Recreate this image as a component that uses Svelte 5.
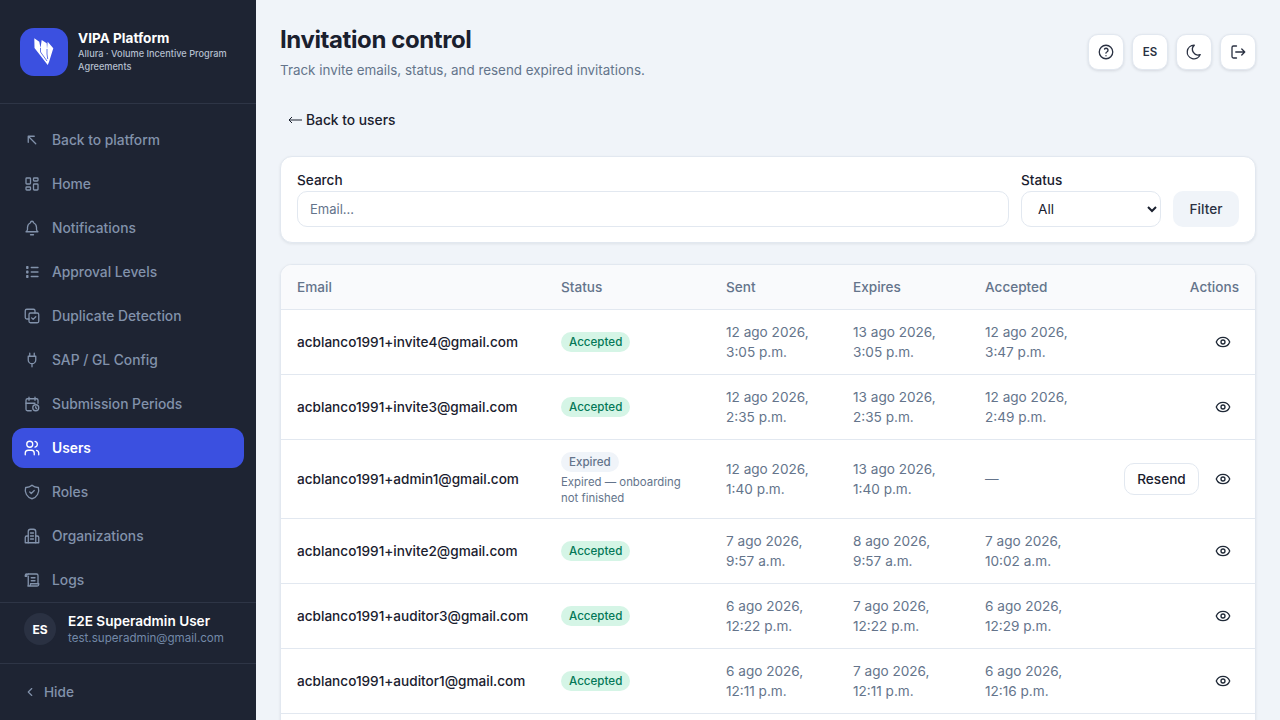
<script>
  const navItems = [
    { label: "Back to platform", icon: "back" },
    { label: "Home", icon: "home" },
    { label: "Notifications", icon: "bell" },
    { label: "Approval Levels", icon: "list" },
    { label: "Duplicate Detection", icon: "copy" },
    { label: "SAP / GL Config", icon: "plug" },
    { label: "Submission Periods", icon: "calendar" },
    { label: "Users", icon: "users", active: true },
    { label: "Roles", icon: "shield" },
    { label: "Organizations", icon: "building" },
    { label: "Logs", icon: "script" }
  ];

  const invites = [
    { email: "acblanco1991+invite4@gmail.com", status: "Accepted", sent: ["12 ago 2026,", "3:05 p.m."], expires: ["13 ago 2026,", "3:05 p.m."], accepted: ["12 ago 2026,", "3:47 p.m."] },
    { email: "acblanco1991+invite3@gmail.com", status: "Accepted", sent: ["12 ago 2026,", "2:35 p.m."], expires: ["13 ago 2026,", "2:35 p.m."], accepted: ["12 ago 2026,", "2:49 p.m."] },
    { email: "acblanco1991+admin1@gmail.com", status: "Expired", note: "Expired — onboarding not finished", sent: ["12 ago 2026,", "1:40 p.m."], expires: ["13 ago 2026,", "1:40 p.m."], accepted: null },
    { email: "acblanco1991+invite2@gmail.com", status: "Accepted", sent: ["7 ago 2026,", "9:57 a.m."], expires: ["8 ago 2026,", "9:57 a.m."], accepted: ["7 ago 2026,", "10:02 a.m."] },
    { email: "acblanco1991+auditor3@gmail.com", status: "Accepted", sent: ["6 ago 2026,", "12:22 p.m."], expires: ["7 ago 2026,", "12:22 p.m."], accepted: ["6 ago 2026,", "12:29 p.m."] },
    { email: "acblanco1991+auditor1@gmail.com", status: "Accepted", sent: ["6 ago 2026,", "12:11 p.m."], expires: ["7 ago 2026,", "12:11 p.m."], accepted: ["6 ago 2026,", "12:16 p.m."] }
  ];
</script>

<div class="shell">
  <aside class="sidebar">
    <div class="brand">
      <div class="logo">
        <svg viewBox="0 0 48 48" width="48" height="48">
          <path fill="#fff" d="M14.300 10.300l5 3.400 1.200 6.300 1.200-8 5 3.300.3 5.700.7-7.300 5.600 6.600-4.300 13.700-1.300 2.900-13.200-17z" />
          <path fill="none" stroke="#3b50e0" stroke-width="0.8" d="M20.500 20v4l6.500 9M27 21v5l.7 5" />
        </svg>
      </div>
      <div class="brand-text">
        <strong>VIPA Platform</strong>
        <span>Allura · Volume Incentive Program Agreements</span>
      </div>
    </div>

    <nav class="nav">
      {#each navItems as item}
        <div class="nav-item" class:active={item.active}>
          <svg class="nav-icon" viewBox="0 0 24 24" width="20" height="20" fill="none" stroke="currentColor" stroke-width="1.75" stroke-linecap="round" stroke-linejoin="round">
            {#if item.icon === "back"}
              <path d="M17 17 7 7M7 15V7h8" />
            {:else if item.icon === "home"}
              <rect x="4" y="4" width="6" height="8" rx="1" /><rect x="4" y="16" width="6" height="4" rx="1" /><rect x="14" y="12" width="6" height="8" rx="1" /><rect x="14" y="4" width="6" height="4" rx="1" />
            {:else if item.icon === "bell"}
              <path d="M10 5a2 2 0 1 1 4 0 7 7 0 0 1 4 6v3a4 4 0 0 0 2 3H4a4 4 0 0 0 2-3v-3a7 7 0 0 1 4-6" /><path d="M10 21h4" />
            {:else if item.icon === "list"}
              <path d="M11 6h9M11 12h9M11 18h9" /><path d="M5 5h1.500v2H5zM5 11h1.500v2H5zM5 17h1.500v2H5z" />
            {:else if item.icon === "copy"}
              <rect x="8" y="8" width="13" height="13" rx="2" /><path d="M16 8V5a2 2 0 0 0-2-2H5a2 2 0 0 0-2 2v9a2 2 0 0 0 2 2h3" /><path d="m11.500 14.500 2 2 3.500-3.500" />
            {:else if item.icon === "plug"}
              <path d="M9 7V3M15 7V3M7 7h10v5a5 5 0 0 1-10 0zM12 17v4" />
            {:else if item.icon === "calendar"}
              <path d="M11 21H6a2 2 0 0 1-2-2V7a2 2 0 0 1 2-2h12a2 2 0 0 1 2 2v4" /><path d="M16 3v4M8 3v4M4 11h12" /><circle cx="17" cy="17" r="4" /><path d="M17 15.500V17l1 1" />
            {:else if item.icon === "users"}
              <circle cx="9" cy="7" r="4" /><path d="M3 21v-2a4 4 0 0 1 4-4h4a4 4 0 0 1 4 4v2" /><path d="M16 3.100a4 4 0 0 1 0 7.800M21 21v-2a4 4 0 0 0-3-3.850" />
            {:else if item.icon === "shield"}
              <path d="M12 3a12 12 0 0 0 8.500 3A12 12 0 0 1 12 21 12 12 0 0 1 3.500 6 12 12 0 0 0 12 3" /><path d="m9 12 2 2 4-4" />
            {:else if item.icon === "building"}
              <path d="M7 21V6a3 3 0 0 1 3-3h4a3 3 0 0 1 3 3v15" /><path d="M7 12H5a2 2 0 0 0-2 2v7h18v-7a2 2 0 0 0-2-2h-2" /><path d="M10 8h4M10 12h4M10 16h4" />
            {:else if item.icon === "script"}
              <path d="M7 4h11a2 2 0 0 1 2 2v11" /><path d="M7 4a2 2 0 0 0-2 2v1H3V6a2 2 0 0 1 2-2" /><path d="M7 7v11a3 3 0 0 1-.500 2H19a2 2 0 0 0 2-2v-1H10v1a2 2 0 0 1-2 2" /><path d="M11 9h5M11 13h5" />
            {/if}
          </svg>
          <span>{item.label}</span>
        </div>
      {/each}
    </nav>

    <div class="user">
      <div class="avatar">ES</div>
      <div class="user-text">
        <strong>E2E Superadmin User</strong>
        <span>test.superadmin@gmail.com</span>
      </div>
    </div>

    <div class="hide">
      <svg viewBox="0 0 24 24" width="14" height="14" fill="none" stroke="currentColor" stroke-width="2" stroke-linecap="round" stroke-linejoin="round"><path d="m15 6-6 6 6 6" /></svg>
      <span>Hide</span>
    </div>
  </aside>

  <main class="content">
    <header class="top">
      <div>
        <h1>Invitation control</h1>
        <p>Track invite emails, status, and resend expired invitations.</p>
      </div>
      <div class="top-actions">
        <button class="square" aria-label="Help">
          <svg viewBox="0 0 24 24" width="18" height="18" fill="none" stroke="currentColor" stroke-width="1.75" stroke-linecap="round" stroke-linejoin="round"><circle cx="12" cy="12" r="9" /><path d="M12 17v.01M12 13.500a1.500 1.500 0 0 1 1-1.500 2.600 2.600 0 1 0-3-4" /></svg>
        </button>
        <button class="square lang">ES</button>
        <button class="square" aria-label="Theme">
          <svg viewBox="0 0 24 24" width="18" height="18" fill="none" stroke="currentColor" stroke-width="1.75" stroke-linecap="round" stroke-linejoin="round"><path d="M12 3h.393a7.500 7.500 0 0 0 7.920 12.446A9 9 0 1 1 12 2.992z" /></svg>
        </button>
        <button class="square" aria-label="Log out">
          <svg viewBox="0 0 24 24" width="18" height="18" fill="none" stroke="currentColor" stroke-width="1.75" stroke-linecap="round" stroke-linejoin="round"><path d="M10 4H6a2 2 0 0 0-2 2v12a2 2 0 0 0 2 2h4" /><path d="M9 12h12M17 8l4 4-4 4" /></svg>
        </button>
      </div>
    </header>

    <a class="back" href="#users">
      <svg viewBox="0 0 14 8" width="14" height="8" fill="none" stroke="currentColor" stroke-width="1"><path d="M14 4H1M4 1 1 4l3 3" /></svg>
      <span>Back to users</span>
    </a>

    <section class="card filters">
      <label class="field grow">
        <span>Search</span>
        <input type="text" placeholder="Email..." />
      </label>
      <label class="field status-field">
        <span>Status</span>
        <select><option>All</option></select>
      </label>
      <button class="filter-btn">Filter</button>
    </section>

    <section class="card table-card">
      <table>
        <colgroup>
          <col style="width:264px" /><col style="width:165px" /><col style="width:127px" /><col style="width:132px" /><col style="width:118px" /><col />
        </colgroup>
        <thead>
          <tr>
            <th>Email</th><th>Status</th><th>Sent</th><th>Expires</th><th>Accepted</th><th class="right">Actions</th>
          </tr>
        </thead>
        <tbody>
          {#each invites as row}
            <tr>
              <td class="email">{row.email}</td>
              <td>
                <span class="badge" class:expired={row.status === "Expired"}>{row.status}</span>
                {#if row.note}<div class="note">{row.note}</div>{/if}
              </td>
              <td class="date">{row.sent[0]}<br />{row.sent[1]}</td>
              <td class="date">{row.expires[0]}<br />{row.expires[1]}</td>
              <td class="date">
                {#if row.accepted}{row.accepted[0]}<br />{row.accepted[1]}{:else}—{/if}
              </td>
              <td class="actions">
                <div class="action-row">
                  {#if row.status === "Expired"}<button class="resend">Resend</button>{/if}
                  <button class="eye" aria-label="View">
                    <svg viewBox="0 0 24 24" width="16" height="16" fill="none" stroke="currentColor" stroke-width="2" stroke-linecap="round" stroke-linejoin="round"><path d="M2.062 12.348a1 1 0 0 1 0-.696 10.750 10.750 0 0 1 19.876 0 1 1 0 0 1 0 .696 10.750 10.750 0 0 1-19.876 0" /><circle cx="12" cy="12" r="3" /></svg>
                  </button>
                </div>
              </td>
            </tr>
          {/each}
          <tr class="empty-row"><td colspan="6"></td></tr>
        </tbody>
      </table>
    </section>
  </main>
</div>

<style>
  :global(body) {
    margin: 0;
    font-family: Inter, "Noto Sans", sans-serif;
    background: #f0f4f9;
  }

  .shell {
    display: flex;
    height: 100vh;
    overflow: hidden;
  }

  /* sidebar */
  .sidebar {
    width: 256px;
    flex-shrink: 0;
    display: flex;
    flex-direction: column;
    background: #1e2433;
    color: #8292ab;
  }

  .brand {
    display: flex;
    align-items: center;
    gap: 10px;
    height: 104px;
    flex-shrink: 0;
    padding: 0 20px;
    box-sizing: border-box;
    border-bottom: 1px solid #2e3546;
  }

  .logo {
    width: 48px;
    height: 48px;
    flex-shrink: 0;
    border-radius: 14px;
    background: #3b50e0;
  }

  .logo svg {
    display: block;
  }

  .brand-text {
    display: flex;
    flex-direction: column;
    min-width: 0;
    padding-bottom: 2px;
  }

  .brand-text strong {
    font-size: 13.600px;
    line-height: 18px;
    font-weight: 700;
    color: #fff;
  }

  .brand-text span {
    font-size: 9.200px;
    line-height: 13px;
    font-weight: 500;
    color: #b4bfce;
  }

  .nav {
    flex: 1;
    display: flex;
    flex-direction: column;
    gap: 4px;
    padding: 16px 12px 0;
    min-height: 0;
  }

  .nav-item {
    display: flex;
    align-items: center;
    gap: 10px;
    height: 40px;
    flex-shrink: 0;
    padding: 0 10px;
    border-radius: 12px;
    font-size: 13.800px;
    font-weight: 500;
  }

  .nav-item.active {
    background: #3b50e0;
    color: #fff;
    font-weight: 600;
  }

  .nav-icon {
    flex-shrink: 0;
    transform: scale(0.9);
  }

  .user {
    display: flex;
    align-items: center;
    gap: 12px;
    height: 62px;
    flex-shrink: 0;
    box-sizing: border-box;
    padding: 0 24px 8px;
    border-top: 1px solid #2e3546;
    border-bottom: 1px solid #2e3546;
  }

  .avatar {
    width: 32px;
    height: 32px;
    flex-shrink: 0;
    display: flex;
    align-items: center;
    justify-content: center;
    border-radius: 50%;
    background: #2a3142;
    color: #fff;
    font-size: 12px;
    font-weight: 700;
  }

  .user-text {
    display: flex;
    flex-direction: column;
  }

  .user-text strong {
    font-size: 13.600px;
    line-height: 18px;
    font-weight: 600;
    color: #fff;
  }

  .user-text span {
    font-size: 11.600px;
    line-height: 17px;
    color: #7389a8;
  }

  .hide {
    display: flex;
    align-items: center;
    gap: 7px;
    height: 56px;
    flex-shrink: 0;
    padding: 0 23px;
    font-size: 13.600px;
    font-weight: 500;
  }

  /* main */
  .content {
    flex: 1;
    min-width: 0;
    padding: 24px 24px 0;
    overflow: hidden;
  }

  .top {
    display: flex;
    justify-content: space-between;
    align-items: flex-start;
    height: 56px;
  }

  h1 {
    margin: 0;
    font-size: 24px;
    line-height: 32px;
    font-weight: 700;
    letter-spacing: -0.4px;
    color: #1a202e;
  }

  .top p {
    margin: 5px 0 0;
    font-size: 13.400px;
    line-height: 18px;
    color: #64748b;
  }

  .top-actions {
    display: flex;
    gap: 8px;
    padding-top: 10px;
  }

  .square {
    width: 36px;
    height: 36px;
    padding: 0;
    display: flex;
    align-items: center;
    justify-content: center;
    border: 1px solid #e2e8f0;
    border-radius: 10px;
    background: #fff;
    color: #2a3142;
    box-shadow: 0 1px 3px rgba(15, 23, 42, 0.12);
    font-family: inherit;
  }

  .lang {
    font-size: 11.500px;
    font-weight: 600;
  }

  .back {
    display: flex;
    align-items: center;
    gap: 4px;
    width: max-content;
    margin: 29px 0 0 8px;
    font-size: 13.800px;
    line-height: 22px;
    font-weight: 500;
    color: #1a202e;
    text-decoration: none;
  }

  .card {
    background: #fff;
    border: 1px solid #e2e8f0;
    border-radius: 12px;
    box-shadow: 0 1px 3px rgba(15, 23, 42, 0.08);
  }

  .filters {
    display: flex;
    align-items: flex-end;
    gap: 12px;
    margin-top: 25px;
    padding: 16px 16px 15px;
  }

  .field {
    display: flex;
    flex-direction: column;
    gap: 4px;
  }

  .field span {
    font-size: 13.600px;
    line-height: 14px;
    font-weight: 500;
    color: #1a202e;
  }

  .grow {
    flex: 1;
  }

  .status-field {
    width: 140px;
  }

  input,
  select {
    height: 36px;
    box-sizing: border-box;
    border: 1px solid #e2e8f0;
    border-radius: 10px;
    background: #fff;
    font-family: inherit;
    font-size: 13.600px;
    color: #1a202e;
  }

  input {
    width: 100%;
    padding: 0 12px;
    outline: none;
    font-size: 13px;
  }

  input::placeholder {
    color: #64748b;
  }

  select {
    width: 100%;
    padding: 0 12px;
  }

  .filter-btn {
    height: 36px;
    width: 66px;
    flex-shrink: 0;
    border: none;
    border-radius: 10px;
    background: #f0f4f9;
    color: #2a3142;
    font-family: inherit;
    font-size: 13.600px;
    font-weight: 500;
  }

  .table-card {
    margin-top: 21px;
    overflow: hidden;
  }

  table {
    width: 100%;
    table-layout: fixed;
    border-collapse: collapse;
    font-size: 13.600px;
  }

  th {
    height: 44px;
    padding: 0 16px;
    box-sizing: border-box;
    background: #f9fafc;
    border-bottom: 1px solid #e2e8f0;
    font-weight: 500;
    text-align: left;
    color: #64748b;
  }

  th.right {
    text-align: right;
  }

  td {
    padding: 12px 16px;
    border-bottom: 1px solid #e2e8f0;
    vertical-align: middle;
    color: #1a202e;
  }

  .email {
    font-weight: 500;
    white-space: nowrap;
  }

  .date {
    line-height: 20px;
    color: #64748b;
  }

  .empty-row td {
    height: 40px;
  }

  .badge {
    display: inline-block;
    padding: 0 8px;
    border-radius: 10px;
    background: #d5f5e6;
    color: #047857;
    font-size: 11.600px;
    line-height: 20px;
    font-weight: 500;
  }

  .badge.expired {
    background: #f0f4f9;
    color: #64748b;
  }

  .note {
    margin-top: 2px;
    font-size: 11.400px;
    line-height: 16px;
    color: #64748b;
  }

  .action-row {
    display: flex;
    align-items: center;
    justify-content: flex-end;
    gap: 8px;
  }

  .resend {
    height: 32px;
    width: 75px;
    padding: 0;
    border: 1px solid #e2e8f0;
    border-radius: 10px;
    background: #fff;
    color: #1a202e;
    font-family: inherit;
    font-size: 13.600px;
    font-weight: 500;
  }

  .eye {
    width: 32px;
    height: 32px;
    padding: 0;
    display: flex;
    align-items: center;
    justify-content: center;
    border: none;
    background: none;
    color: #1f2937;
  }
</style>
